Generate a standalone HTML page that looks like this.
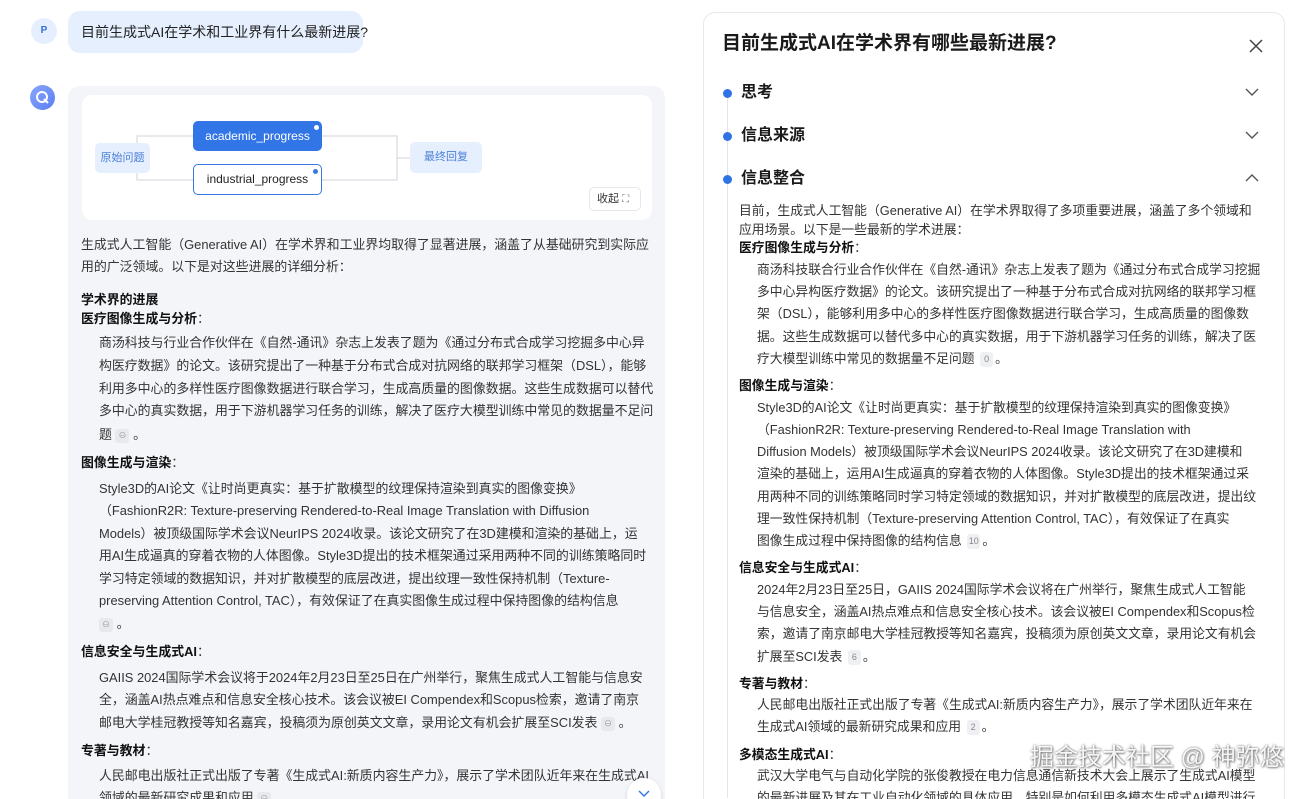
<!DOCTYPE html>
<html style="overflow:hidden"><head><meta charset="utf-8"><style>
*{margin:0;padding:0;box-sizing:border-box}
html,body{width:1313px;height:799px;overflow:hidden}
body{background:#fff;font-family:"Liberation Sans","Noto Sans CJK SC",sans-serif;color:#333;position:relative}
.a{position:absolute;white-space:nowrap}
.l{position:absolute;white-space:nowrap;font-size:12.9px;line-height:22px;color:#333}
.r{position:absolute;white-space:nowrap;font-size:12.8px;line-height:20px;color:#333}
b{color:#111;font-weight:700}
.lk{display:inline-block;width:14px;height:14px;background:#e8e9ec;border-radius:3px;vertical-align:middle;font-size:8px;color:#999;text-align:center;line-height:14px}
.n{display:inline-block;min-width:13px;height:15px;background:#eef0f3;border-radius:3px;vertical-align:middle;font-size:9px;color:#888;text-align:center;line-height:15px;margin:0 2px}
</style></head><body>
<div class="a" style="left:31px;top:18px;width:26px;height:26px;border-radius:50%;background:#e6efff;color:#3a6fd8;font-size:10px;font-weight:700;text-align:center;line-height:26px">P</div>
<div class="a" style="left:68px;top:11px;width:295px;height:42px;border-radius:12px;background:#e5effe;font-size:14px;line-height:42px;padding-left:13px;color:#222">目前生成式AI在学术和工业界有什么最新进展?</div>
<div class="a" style="left:30px;top:85px;width:25px;height:25px;border-radius:50%;background:linear-gradient(135deg,#8aa6ff,#5a7ef0)"><svg width="25" height="25"><circle cx="12" cy="12" r="5" fill="none" stroke="#fff" stroke-width="2"/><path d="M14 14l4 4" stroke="#fff" stroke-width="2"/></svg></div>
<div class="a" style="left:68px;top:86px;width:597px;height:713px;background:#f3f5f9;border-radius:12px 12px 0 0"></div>
<div class="a" style="left:82px;top:95px;width:570px;height:125px;background:#fff;border-radius:10px"></div>
<svg class="a" style="left:0;top:0" width="700" height="230">
<path d="M150 158H137V136H193M137 158V180H193M322 136H397V158H410M322 180H397V158" fill="none" stroke="#cfd3da" stroke-width="1"/>
</svg>
<div class="a" style="left:95px;top:143px;width:55px;height:30px;background:#e5effe;border-radius:5px;color:#4b7fd8;font-size:11px;line-height:30px;text-align:center">原始问题</div>
<div class="a" style="left:193px;top:121px;width:129px;height:30px;background:#3275e6;border-radius:5px;color:#fff;font-size:12px;line-height:30px;text-align:center">academic_progress<span style="position:absolute;right:3px;top:4px;width:5px;height:5px;border-radius:50%;background:#fff"></span></div>
<div class="a" style="left:193px;top:164px;width:129px;height:31px;background:#fff;border:1px solid #3a78e2;border-radius:5px;color:#222;font-size:12px;line-height:29px;text-align:center">industrial_progress<span style="position:absolute;right:3px;top:4px;width:5px;height:5px;border-radius:50%;background:#3a78e2"></span></div>
<div class="a" style="left:410px;top:142px;width:72px;height:31px;background:#e5effe;border-radius:5px;color:#4b7fd8;font-size:11px;line-height:31px;text-align:center">最终回复</div>
<div class="a" style="left:589px;top:187px;width:52px;height:24px;border:1px solid #e5e7eb;border-radius:5px;font-size:11px;line-height:22px;padding-left:7px;color:#333">收起 <span style="color:#777;font-size:10px">⛶</span></div>
<div class="l" style="left:81px;top:234px">生成式人工智能（Generative AI）在学术界和工业界均取得了显著进展，涵盖了从基础研究到实际应</div>
<div class="l" style="left:81px;top:256px">用的广泛领域。以下是对这些进展的详细分析：</div>
<div class="l" style="left:81px;top:289px"><b>学术界的进展</b></div>
<div class="l" style="left:81px;top:308px"><b>医疗图像生成与分析</b>：</div>
<div class="l" style="left:99px;top:332px">商汤科技与行业合作伙伴在《自然-通讯》杂志上发表了题为《通过分布式合成学习挖掘多中心异</div>
<div class="l" style="left:99px;top:355px">构医疗数据》的论文。该研究提出了一种基于分布式合成对抗网络的联邦学习框架（DSL），能够</div>
<div class="l" style="left:99px;top:378px">利用多中心的多样性医疗图像数据进行联合学习，生成高质量的图像数据。这些生成数据可以替代</div>
<div class="l" style="left:99px;top:400px">多中心的真实数据，用于下游机器学习任务的训练，解决了医疗大模型训练中常见的数据量不足问</div>
<div class="l" style="left:99px;top:424px">题 <span class="lk">⊖</span> 。</div>
<div class="l" style="left:81px;top:452px"><b>图像生成与渲染</b>：</div>
<div class="l" style="left:99px;top:478px">Style3D的AI论文《让时尚更真实：基于扩散模型的纹理保持渲染到真实的图像变换》</div>
<div class="l" style="left:99px;top:500px">（FashionR2R: Texture-preserving Rendered-to-Real Image Translation with Diffusion</div>
<div class="l" style="left:99px;top:523px">Models）被顶级国际学术会议NeurIPS 2024收录。该论文研究了在3D建模和渲染的基础上，运</div>
<div class="l" style="left:99px;top:545px">用AI生成逼真的穿着衣物的人体图像。Style3D提出的技术框架通过采用两种不同的训练策略同时</div>
<div class="l" style="left:99px;top:568px">学习特定领域的数据知识，并对扩散模型的底层改进，提出纹理一致性保持机制（Texture-</div>
<div class="l" style="left:99px;top:590px">preserving Attention Control, TAC），有效保证了在真实图像生成过程中保持图像的结构信息</div>
<div class="l" style="left:99px;top:613px"><span class="lk">⊖</span> 。</div>
<div class="l" style="left:81px;top:641px"><b>信息安全与生成式AI</b>：</div>
<div class="l" style="left:99px;top:667px">GAIIS 2024国际学术会议将于2024年2月23日至25日在广州举行，聚焦生成式人工智能与信息安</div>
<div class="l" style="left:99px;top:689px">全，涵盖AI热点难点和信息安全核心技术。该会议被EI Compendex和Scopus检索，邀请了南京</div>
<div class="l" style="left:99px;top:712px">邮电大学桂冠教授等知名嘉宾，投稿须为原创英文文章，录用论文有机会扩展至SCI发表 <span class="lk">⊖</span> 。</div>
<div class="l" style="left:81px;top:740px"><b>专著与教材</b>：</div>
<div class="l" style="left:99px;top:765px">人民邮电出版社正式出版了专著《生成式AI:新质内容生产力》，展示了学术团队近年来在生成式AI</div>
<div class="l" style="left:99px;top:787px">领域的最新研究成果和应用 <span class="lk">⊖</span></div>
<div class="a" style="left:627px;top:778px;width:34px;height:34px;border-radius:50%;background:#fff;box-shadow:0 1px 4px rgba(0,0,0,.12)"><svg width="34" height="34"><path d="M12 13l5 5 5-5" fill="none" stroke="#3a78e2" stroke-width="1.5"/></svg></div>
<div class="a" style="left:703px;top:12px;width:582px;height:800px;border:1px solid #e6e8ec;border-radius:12px;background:#fff"></div>
<div class="a" style="left:722px;top:31px;font-size:19px;font-weight:700;color:#1a1a1a;line-height:26px">目前生成式AI在学术界有哪些最新进展?</div>
<svg class="a" style="left:1248px;top:38px" width="16" height="16"><path d="M2 2l12 12M14 2L2 14" stroke="#444" stroke-width="1.5"/></svg>
<div class="a" style="left:727px;top:98px;width:1px;height:700px;background:#e3e5e9"></div>
<div class="a" style="left:723px;top:89px;width:9px;height:9px;border-radius:50%;background:#2f73e4"></div>
<div class="a" style="left:723px;top:132px;width:9px;height:9px;border-radius:50%;background:#2f73e4"></div>
<div class="a" style="left:723px;top:175px;width:9px;height:9px;border-radius:50%;background:#2f73e4"></div>
<div class="a" style="left:741px;top:82px;font-size:16px;font-weight:700;color:#1a1a1a;line-height:22px">思考</div>
<div class="a" style="left:741px;top:125px;font-size:16px;font-weight:700;color:#1a1a1a;line-height:22px">信息来源</div>
<div class="a" style="left:741px;top:168px;font-size:16px;font-weight:700;color:#1a1a1a;line-height:22px">信息整合</div>
<svg class="a" style="left:1244px;top:86px" width="16" height="12"><path d="M2 3l6 6 6-6" fill="none" stroke="#555" stroke-width="1.4"/></svg>
<svg class="a" style="left:1244px;top:129px" width="16" height="12"><path d="M2 3l6 6 6-6" fill="none" stroke="#555" stroke-width="1.4"/></svg>
<svg class="a" style="left:1244px;top:172px" width="16" height="12"><path d="M2 9l6-6 6 6" fill="none" stroke="#555" stroke-width="1.4"/></svg>
<div class="r" style="left:739px;top:201px">目前，生成式人工智能（Generative AI）在学术界取得了多项重要进展，涵盖了多个领域和</div>
<div class="r" style="left:739px;top:220px">应用场景。以下是一些最新的学术进展：</div>
<div class="r" style="left:739px;top:238px"><b>医疗图像生成与分析</b>：</div>
<div class="r" style="left:757px;top:260px">商汤科技联合行业合作伙伴在《自然-通讯》杂志上发表了题为《通过分布式合成学习挖掘</div>
<div class="r" style="left:757px;top:282px">多中心异构医疗数据》的论文。该研究提出了一种基于分布式合成对抗网络的联邦学习框</div>
<div class="r" style="left:757px;top:304px">架（DSL），能够利用多中心的多样性医疗图像数据进行联合学习，生成高质量的图像数</div>
<div class="r" style="left:757px;top:327px">据。这些生成数据可以替代多中心的真实数据，用于下游机器学习任务的训练，解决了医</div>
<div class="r" style="left:757px;top:349px">疗大模型训练中常见的数据量不足问题 <span class="n">0</span>。</div>
<div class="r" style="left:739px;top:376px"><b>图像生成与渲染</b>：</div>
<div class="r" style="left:757px;top:398px">Style3D的AI论文《让时尚更真实：基于扩散模型的纹理保持渲染到真实的图像变换》</div>
<div class="r" style="left:757px;top:420px">（FashionR2R: Texture-preserving Rendered-to-Real Image Translation with</div>
<div class="r" style="left:757px;top:442px">Diffusion Models）被顶级国际学术会议NeurIPS 2024收录。该论文研究了在3D建模和</div>
<div class="r" style="left:757px;top:464px">渲染的基础上，运用AI生成逼真的穿着衣物的人体图像。Style3D提出的技术框架通过采</div>
<div class="r" style="left:757px;top:487px">用两种不同的训练策略同时学习特定领域的数据知识，并对扩散模型的底层改进，提出纹</div>
<div class="r" style="left:757px;top:509px">理一致性保持机制（Texture-preserving Attention Control, TAC），有效保证了在真实</div>
<div class="r" style="left:757px;top:531px">图像生成过程中保持图像的结构信息 <span class="n">10</span>。</div>
<div class="r" style="left:739px;top:558px"><b>信息安全与生成式AI</b>：</div>
<div class="r" style="left:757px;top:580px">2024年2月23日至25日，GAIIS 2024国际学术会议将在广州举行，聚焦生成式人工智能</div>
<div class="r" style="left:757px;top:602px">与信息安全，涵盖AI热点难点和信息安全核心技术。该会议被EI Compendex和Scopus检</div>
<div class="r" style="left:757px;top:624px">索，邀请了南京邮电大学桂冠教授等知名嘉宾，投稿须为原创英文文章，录用论文有机会</div>
<div class="r" style="left:757px;top:647px">扩展至SCI发表 <span class="n">6</span>。</div>
<div class="r" style="left:739px;top:674px"><b>专著与教材</b>：</div>
<div class="r" style="left:757px;top:695px">人民邮电出版社正式出版了专著《生成式AI:新质内容生产力》，展示了学术团队近年来在</div>
<div class="r" style="left:757px;top:717px">生成式AI领域的最新研究成果和应用 <span class="n">2</span>。</div>
<div class="r" style="left:739px;top:745px"><b>多模态生成式AI</b>：</div>
<div class="r" style="left:757px;top:766px">武汉大学电气与自动化学院的张俊教授在电力信息通信新技术大会上展示了生成式AI模型</div>
<div class="r" style="left:757px;top:788px">的最新进展及其在工业自动化领域的具体应用，特别是如何利用多模态生成式AI模型进行</div>
<div class="a" style="left:1030px;top:741px;font-size:24px;line-height:34px;color:rgba(255,255,255,.92);text-shadow:0 0 2px rgba(0,0,0,.55),1px 1px 2px rgba(0,0,0,.4)">掘金技术社区 @ 神弥悠</div>
</body></html>
